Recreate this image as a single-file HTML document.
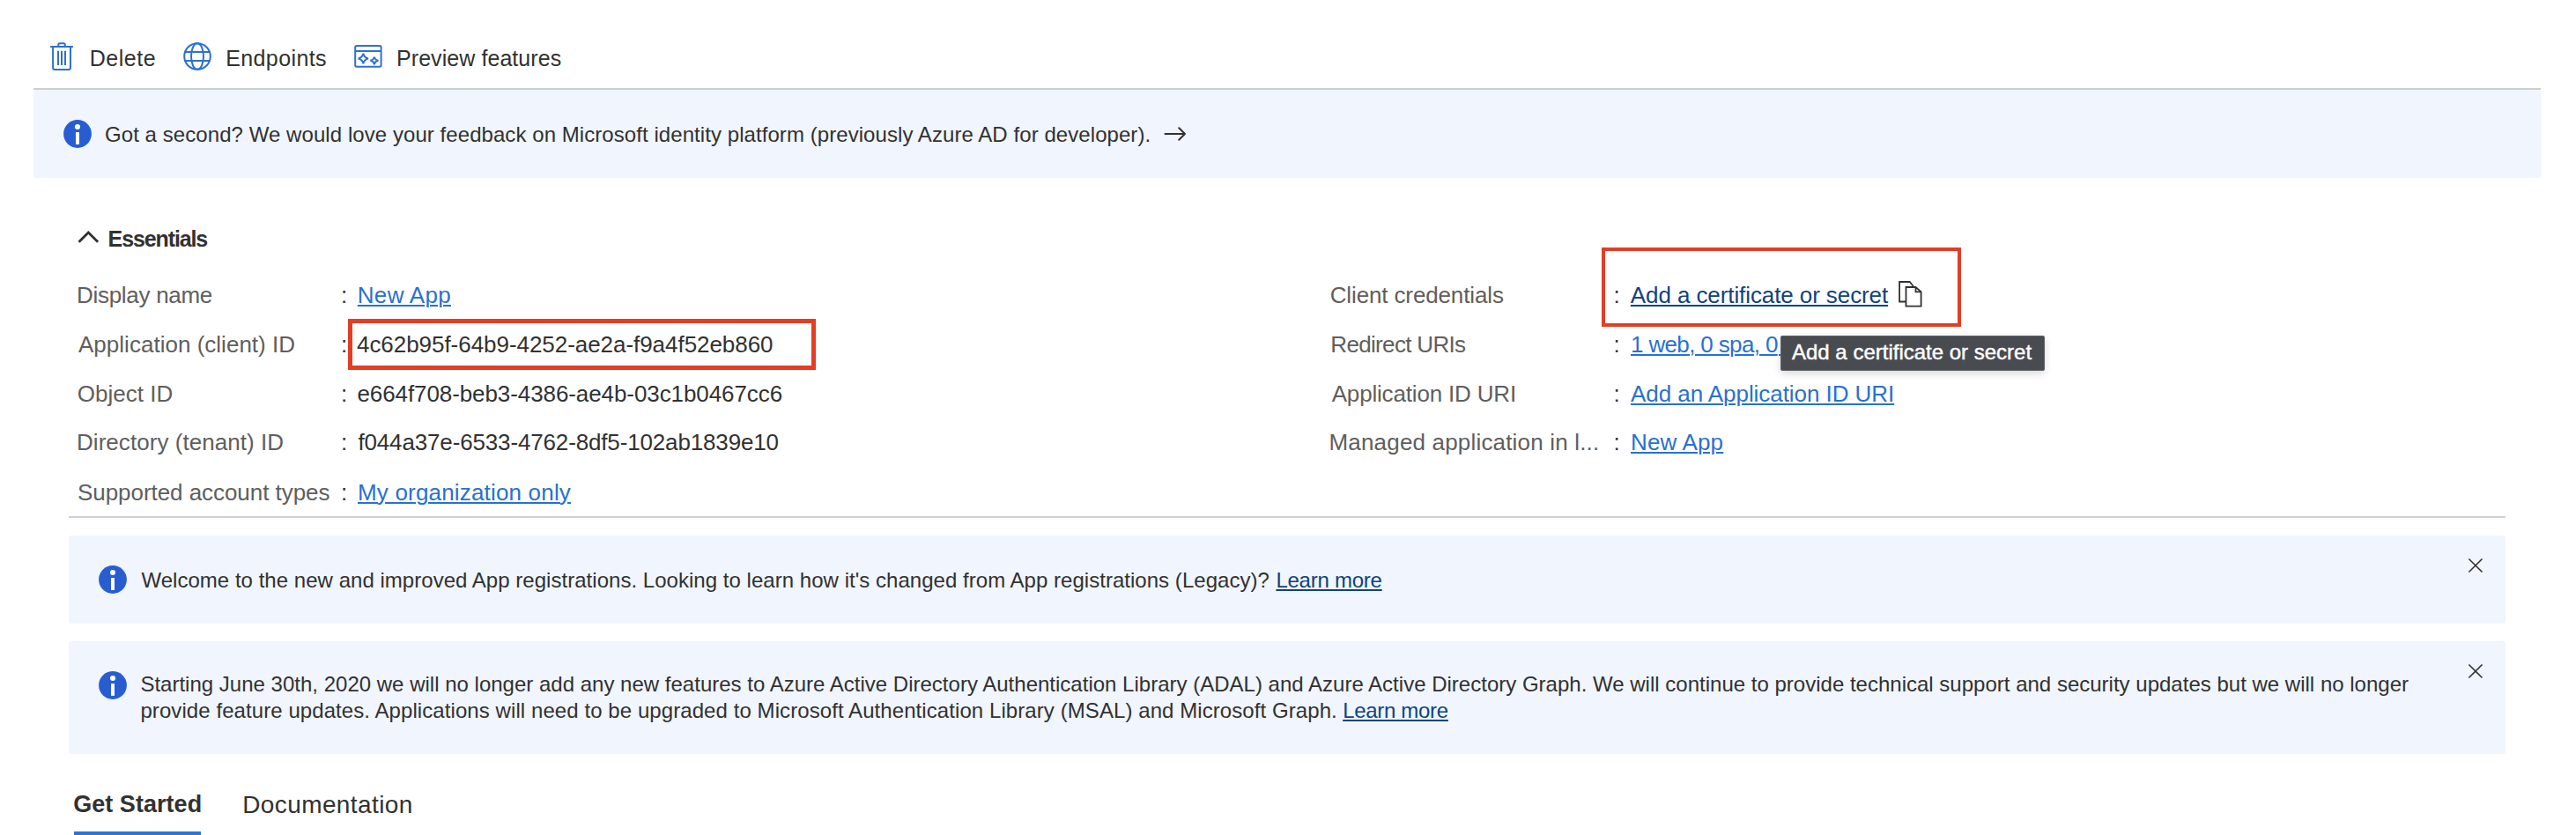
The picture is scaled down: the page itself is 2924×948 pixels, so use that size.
<!DOCTYPE html>
<html><head><meta charset="utf-8"><title>App registration</title>
<style>
html,body{margin:0;padding:0;background:#fff;}
body{width:2924px;height:948px;position:relative;overflow:hidden;font-family:"Liberation Sans",sans-serif;}
.a{position:absolute;}
.t{position:absolute;white-space:nowrap;}
.u{text-decoration:underline;text-decoration-thickness:2px;text-underline-offset:2px;}
</style></head><body>
<svg class="a" style="left:50px;top:42px" width="40" height="44" viewBox="50 42 40 44" fill="none" stroke="#2d71d0" stroke-width="2">
<path d="M57.1 53H82.9"/><path d="M66.3 53V50.6a1.4 1.4 0 0 1 1.4-1.4h4.7a1.4 1.4 0 0 1 1.4 1.4V53"/>
<path d="M60.1 53V76.7a2.2 2.2 0 0 0 2.2 2.2H77.8a2.2 2.2 0 0 0 2.2-2.2V53"/>
<path d="M66 57.8V73.9M70 57.8V73.9M74 57.8V73.9"/></svg>
<svg class="a" style="left:202px;top:42px" width="44" height="44" viewBox="202 42 44 44" fill="none" stroke="#2d71d0" stroke-width="2">
<circle cx="224" cy="64" r="14.8"/><ellipse cx="224" cy="64" rx="7" ry="14.8"/><path d="M209.5 59H238.5M209.5 69H238.5"/></svg>
<svg class="a" style="left:396px;top:44px" width="44" height="40" viewBox="396 44 44 40" fill="none" stroke="#2d71d0" stroke-width="2">
<rect x="403.2" y="52" width="29.4" height="23.8" rx="1.8"/><path d="M403.2 58H432.6"/>
<path d="M412.3 60.8Q413.2 65.5 418 66.4Q413.2 67.3 412.3 72.2Q411.4 67.3 406.6 66.4Q411.4 65.5 412.3 60.8Z"/>
<path d="M424.9 64.6Q425.6 68.1 429.5 68.8Q425.6 69.5 424.9 73.3Q424.2 69.5 420.4 68.8Q424.2 68.1 424.9 64.6Z"/></svg>
<div class="t " style="left:101.70px;top:53.64px;font-size:25px;line-height:25px;color:#323130;letter-spacing:0.520px;">Delete</div>
<div class="t " style="left:256.20px;top:53.64px;font-size:25px;line-height:25px;color:#323130;letter-spacing:0.400px;">Endpoints</div>
<div class="t " style="left:450.00px;top:53.64px;font-size:25px;line-height:25px;color:#323130;letter-spacing:0.067px;">Preview features</div>
<div class="a" style="left:38px;top:100px;width:2846px;height:2px;background:#cdcdcd"></div>
<div class="a" style="left:38px;top:102px;width:2846px;height:100px;background:#f0f5fe;border-radius:3px"></div>
<svg class="a" style="left:72px;top:136px" width="32" height="32" viewBox="0 0 32 32">
<circle cx="16" cy="16" r="15.9" fill="#285dd2"/><circle cx="16" cy="8.1" r="3" fill="#fff"/><rect x="14" y="14.1" width="4" height="13.8" fill="#fff"/></svg>
<div class="t " style="left:119.00px;top:140.68px;font-size:24px;line-height:24px;color:#323130;letter-spacing:0.065px;">Got a second? We would love your feedback on Microsoft identity platform (previously Azure AD for developer).</div>
<svg class="a" style="left:1314px;top:136px" width="40" height="32" viewBox="1314 136 40 32" fill="none" stroke="#323130" stroke-width="2" stroke-linecap="round" stroke-linejoin="round">
<path d="M1322.5 152H1345M1338.2 145.2L1345 152L1338.2 158.8"/></svg>
<svg class="a" style="left:82px;top:252px" width="40" height="34" viewBox="82 252 40 34" fill="none" stroke="#323130" stroke-width="2.8">
<path d="M89.5 274.8L100.3 264L111.1 274.8"/></svg>
<div class="t " style="left:122.60px;top:258.84px;font-size:25px;line-height:25px;color:#323130;font-weight:700;letter-spacing:-1.111px;">Essentials</div>
<div class="t " style="left:87.00px;top:321.69px;font-size:26px;line-height:26px;color:#605e5c;letter-spacing:-0.291px;">Display name</div>
<div class="t " style="left:89.00px;top:377.59px;font-size:26px;line-height:26px;color:#605e5c;letter-spacing:0.018px;">Application (client) ID</div>
<div class="t " style="left:87.80px;top:433.59px;font-size:26px;line-height:26px;color:#605e5c;letter-spacing:0.025px;">Object ID</div>
<div class="t " style="left:87.00px;top:489.49px;font-size:26px;line-height:26px;color:#605e5c;letter-spacing:0.050px;">Directory (tenant) ID</div>
<div class="t " style="left:88.00px;top:545.59px;font-size:26px;line-height:26px;color:#605e5c;letter-spacing:-0.054px;">Supported account types</div>
<div class="t " style="left:387.00px;top:321.69px;font-size:26px;line-height:26px;color:#323130;">:</div>
<div class="t " style="left:387.00px;top:377.59px;font-size:26px;line-height:26px;color:#323130;">:</div>
<div class="t " style="left:387.00px;top:433.59px;font-size:26px;line-height:26px;color:#323130;">:</div>
<div class="t " style="left:387.00px;top:489.49px;font-size:26px;line-height:26px;color:#323130;">:</div>
<div class="t " style="left:387.00px;top:545.59px;font-size:26px;line-height:26px;color:#323130;">:</div>
<div class="t u" style="left:405.80px;top:321.69px;font-size:26px;line-height:26px;color:#2870d2;letter-spacing:0.300px;">New App</div>
<div class="t " style="left:405.00px;top:377.59px;font-size:26px;line-height:26px;color:#323130;letter-spacing:-0.046px;">4c62b95f-64b9-4252-ae2a-f9a4f52eb860</div>
<div class="t " style="left:405.40px;top:433.59px;font-size:26px;line-height:26px;color:#323130;letter-spacing:-0.086px;">e664f708-beb3-4386-ae4b-03c1b0467cc6</div>
<div class="t " style="left:406.40px;top:489.49px;font-size:26px;line-height:26px;color:#323130;letter-spacing:-0.149px;">f044a37e-6533-4762-8df5-102ab1839e10</div>
<div class="t u" style="left:406.00px;top:545.59px;font-size:26px;line-height:26px;color:#2870d2;letter-spacing:0.179px;">My organization only</div>
<div class="t " style="left:1509.70px;top:321.69px;font-size:26px;line-height:26px;color:#605e5c;letter-spacing:-0.129px;">Client credentials</div>
<div class="t " style="left:1510.30px;top:377.59px;font-size:26px;line-height:26px;color:#605e5c;letter-spacing:-0.667px;">Redirect URIs</div>
<div class="t " style="left:1511.70px;top:433.59px;font-size:26px;line-height:26px;color:#605e5c;letter-spacing:-0.176px;">Application ID URI</div>
<div class="t " style="left:1508.50px;top:489.49px;font-size:26px;line-height:26px;color:#605e5c;letter-spacing:0.177px;">Managed application in l...</div>
<div class="t " style="left:1831.60px;top:321.69px;font-size:26px;line-height:26px;color:#323130;">:</div>
<div class="t " style="left:1831.60px;top:377.59px;font-size:26px;line-height:26px;color:#323130;">:</div>
<div class="t " style="left:1831.60px;top:433.59px;font-size:26px;line-height:26px;color:#323130;">:</div>
<div class="t " style="left:1831.60px;top:489.49px;font-size:26px;line-height:26px;color:#323130;">:</div>
<div class="t u" style="left:1850.80px;top:321.69px;font-size:26px;line-height:26px;color:#0f4280;letter-spacing:-0.092px;">Add a certificate or secret</div>
<div class="t u" style="left:1851.00px;top:377.59px;font-size:26px;line-height:26px;color:#2870d2;letter-spacing:-0.643px;">1 web, 0 spa, 0</div>
<div class="t u" style="left:1851.00px;top:433.59px;font-size:26px;line-height:26px;color:#2870d2;letter-spacing:-0.058px;">Add an Application ID URI</div>
<div class="t u" style="left:1851.00px;top:489.49px;font-size:26px;line-height:26px;color:#2870d2;letter-spacing:0.167px;">New App</div>
<div class="a u" style="white-space:nowrap;left:2019px;top:377.59px;font-size:26px;line-height:26px;color:#2870d2">&nbsp;public client</div>
<svg class="a" style="left:2150px;top:314px" width="40" height="40" viewBox="2150 314 40 40" fill="none" stroke="#323130" stroke-width="1.8" stroke-linejoin="miter">
<path d="M2163.5 342.5H2156.1V320H2167.7L2171.6 324.7V326"/>
<path d="M2163.5 326H2174.5L2180.6 331.3V347.7H2163.5Z"/><path d="M2174.5 326V331.3H2180.6"/></svg>
<div class="a" style="left:395px;top:362px;width:531px;height:57.5px;box-sizing:border-box;border:5px solid #e43d24"></div>
<div class="a" style="left:1818px;top:281px;width:408px;height:90px;box-sizing:border-box;border:4px solid #e43d24"></div>
<div class="a" style="left:2021px;top:381px;width:300px;height:39.5px;box-sizing:border-box;background:#484b50;border:1px solid #606367;border-radius:2px;box-shadow:0 3px 9px rgba(0,0,0,0.16)"></div>
<div class="t " style="left:2034.00px;top:387.68px;font-size:24px;line-height:24px;color:#ffffff;-webkit-text-stroke:0.45px #fff;">Add a certificate or secret</div>
<div class="a" style="left:78px;top:586px;width:2766px;height:2px;background:#d0d0d0"></div>
<div class="a" style="left:78px;top:608px;width:2766px;height:100px;background:#f0f5fe;border-radius:3px"></div>
<svg class="a" style="left:112px;top:642px" width="32" height="32" viewBox="0 0 32 32">
<circle cx="16" cy="16" r="15.9" fill="#285dd2"/><circle cx="16" cy="8.1" r="3" fill="#fff"/><rect x="14" y="14.1" width="4" height="13.8" fill="#fff"/></svg>
<div class="t " style="left:160.40px;top:646.68px;font-size:24px;line-height:24px;color:#323130;letter-spacing:0.031px;">Welcome to the new and improved App registrations. Looking to learn how it&#39;s changed from App registrations (Legacy)?</div>
<div class="t u" style="left:1448.40px;top:646.68px;font-size:24px;line-height:24px;color:#0f4280;letter-spacing:-0.244px;">Learn more</div>
<svg class="a" style="left:2798px;top:630px" width="24" height="24" viewBox="0 0 24 24" fill="none" stroke="#323130" stroke-width="1.6"><path d="M4.4 4.5L19.5 19.5M19.5 4.5L4.4 19.5"/></svg>
<div class="a" style="left:78px;top:728px;width:2766px;height:128px;background:#f0f5fe;border-radius:3px"></div>
<svg class="a" style="left:112px;top:762px" width="32" height="32" viewBox="0 0 32 32">
<circle cx="16" cy="16" r="15.9" fill="#285dd2"/><circle cx="16" cy="8.1" r="3" fill="#fff"/><rect x="14" y="14.1" width="4" height="13.8" fill="#fff"/></svg>
<div class="t " style="left:159.40px;top:765.28px;font-size:24px;line-height:24px;color:#323130;letter-spacing:0.007px;">Starting June 30th, 2020 we will no longer add any new features to Azure Active Directory Authentication Library (ADAL) and Azure Active Directory Graph. We will continue to provide technical support and security updates but we will no longer</div>
<div class="t " style="left:159.40px;top:794.98px;font-size:24px;line-height:24px;color:#323130;letter-spacing:0.077px;">provide feature updates. Applications will need to be upgraded to Microsoft Authentication Library (MSAL) and Microsoft Graph.</div>
<div class="t u" style="left:1524.20px;top:794.98px;font-size:24px;line-height:24px;color:#0f4280;letter-spacing:-0.311px;">Learn more</div>
<svg class="a" style="left:2798px;top:750px" width="24" height="24" viewBox="0 0 24 24" fill="none" stroke="#323130" stroke-width="1.6"><path d="M4.4 4.5L19.5 19.5M19.5 4.5L4.4 19.5"/></svg>
<div class="t " style="left:83.20px;top:900.34px;font-size:27px;line-height:27px;color:#323130;font-weight:700;letter-spacing:0.040px;">Get Started</div>
<div class="t " style="left:275.20px;top:899.50px;font-size:28px;line-height:28px;color:#323130;letter-spacing:0.400px;">Documentation</div>
<div class="a" style="left:84px;top:944px;width:144px;height:4px;background:#2f74d0"></div>
</body></html>
